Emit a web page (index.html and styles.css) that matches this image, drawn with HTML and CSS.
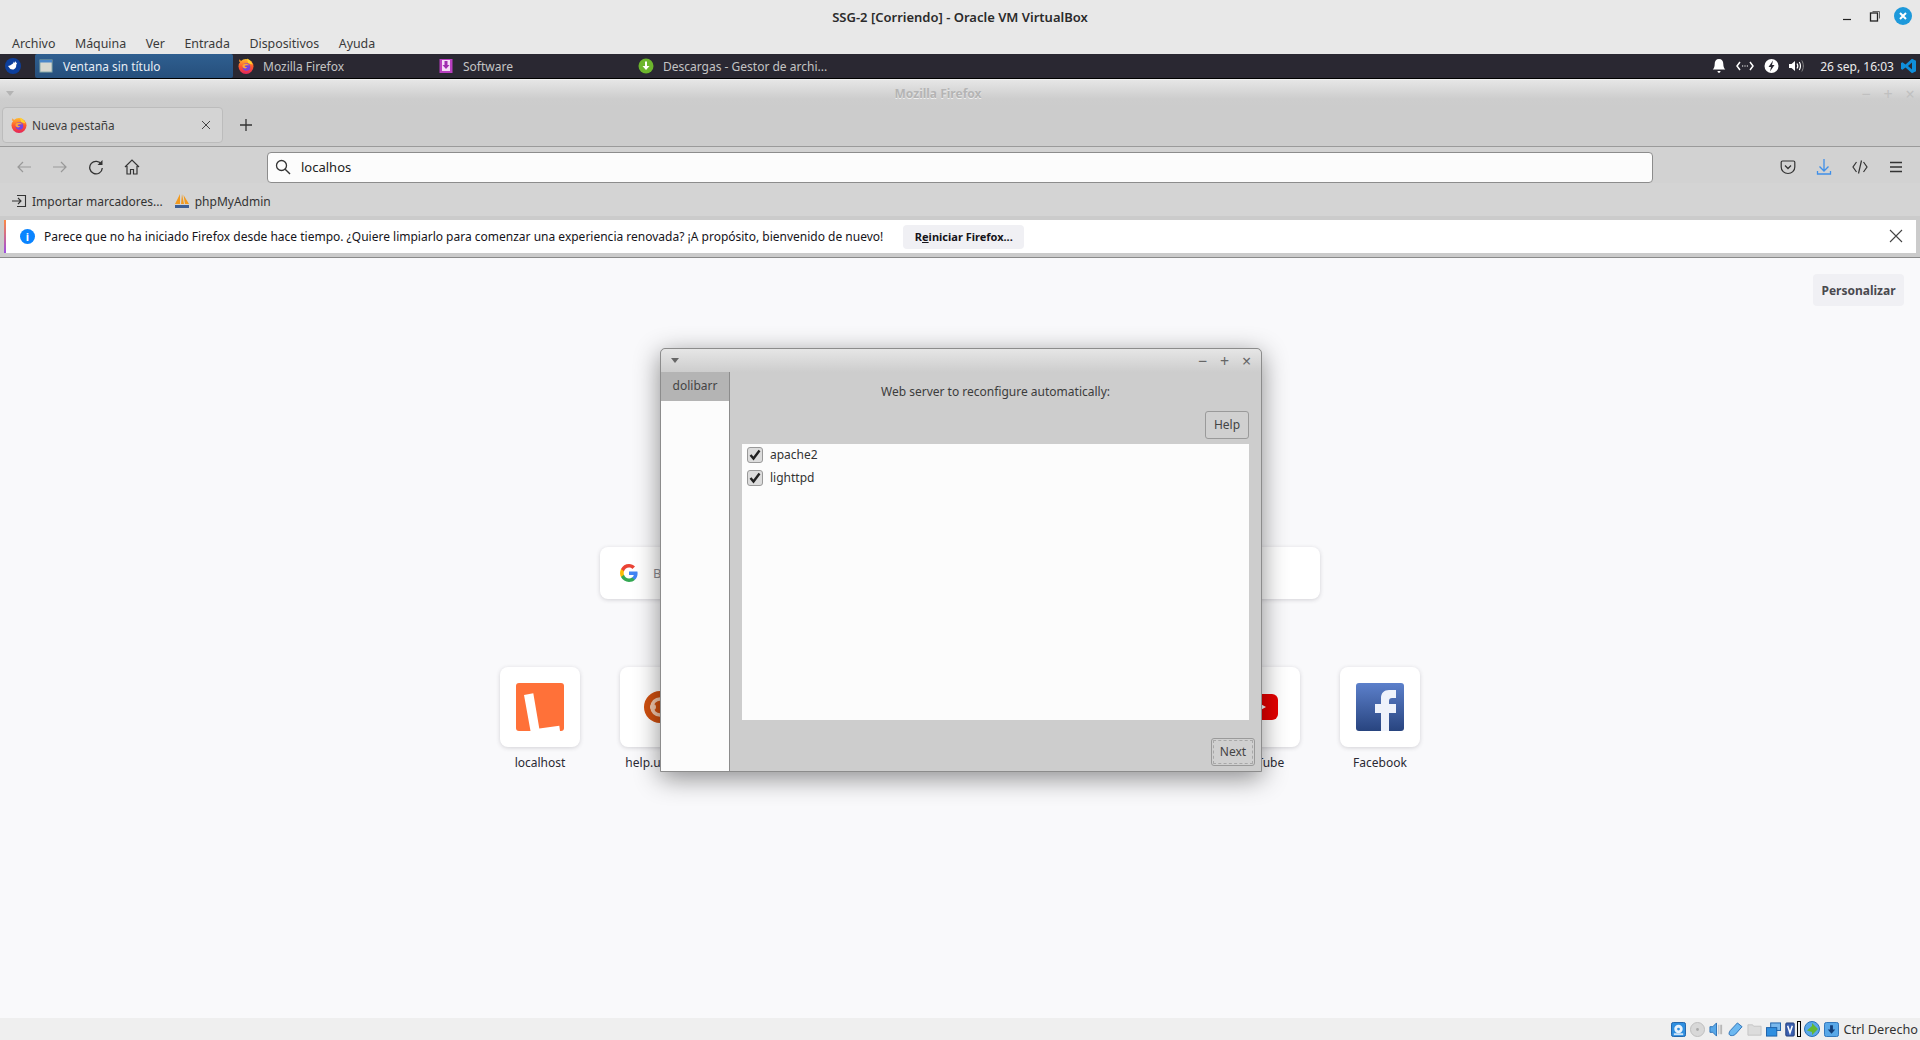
FILE: index.html
```html
<!DOCTYPE html>
<html lang="es">

<head>
    <meta charset="UTF-8">
    <meta name="viewport" content="width=device-width, initial-scale=1.0">
    <title>SSG-2 [Corriendo] - Oracle VM VirtualBox</title>
    <link rel="stylesheet" href="styles.css">
</head>

<body>
    <svg class="defs" width="0" height="0">
        <defs>
            <linearGradient id="fxBody" x1="0" y1="0" x2="0" y2="1">
                <stop offset="0" stop-color="#ffbd2e" />
                <stop offset=".5" stop-color="#ff5a2c" />
                <stop offset="1" stop-color="#e3245c" />
            </linearGradient>
            <symbol id="firefox" viewBox="0 0 16 16">
                <circle cx="8" cy="8.500" r="7.500" fill="url(#fxBody)" />
                <path d="M9 .5c2.500 1.500 4.500 3 5.500 6l-4.500-1.500z" fill="#ffd42e" />
                <path d="M1.500 4C1 3 1.200 2 1.500 1.200c.5 1 1.300 1.800 2.500 2.300z" fill="#ff9a2e" />
                <circle cx="8.500" cy="9" r="3.800" fill="#7542e5" />
                <path d="M5 6.500c2-1.500 5-1 6.500 1-2-.6-4-.4-5 .5.500 1 1.500 1.300 2.800 1.300-.8 1.400-3 1.500-4.300.2C4.200 8.600 4.400 7.300 5 6.500z" fill="#ffa436" />
            </symbol>
        </defs>
    </svg>

    <header class="vbox-head">
        <div class="vbox-title">
            <span>SSG-2 [Corriendo] - Oracle VM VirtualBox</span>
            <div class="vbox-ctrl">
                <svg width="12" height="12" viewBox="0 0 12 12"><path d="M2 9.500h8" stroke="#222" stroke-width="1.200" /></svg>
                <svg width="12" height="14" viewBox="0 0 12 14"><path d="M3.500 2.500h7v7" fill="none" stroke="#666" /><rect x="1.500" y="4" width="7" height="8" fill="none" stroke="#222" stroke-width="1.300" /></svg>
                <span class="vbox-close">
                    <svg width="10" height="10" viewBox="0 0 10 10"><path d="M2 2l6 6M8 2l-6 6" stroke="#fff" stroke-width="2" /></svg>
                </span>
            </div>
        </div>
        <nav class="vbox-menu">
            <span>Archivo</span>
            <span>Máquina</span>
            <span>Ver</span>
            <span>Entrada</span>
            <span>Dispositivos</span>
            <span>Ayuda</span>
        </nav>
    </header>

    <main class="guest">
        <div class="taskbar">
            <span class="xfce-logo">
                <svg width="16" height="16" viewBox="0 0 16 16"><circle cx="8" cy="8" r="8" fill="#0d3f9c" /><path d="M3 8l2-.5 3-2 1-2 .6 1.500 1.400-2 0 2 1.200-.5-1 2.500c.3 2-1 4.500-3.500 4.500-2 0-3-1-3.500-2z" fill="#fff" /></svg>
            </span>
            <div class="task active">
                <svg width="16" height="16" viewBox="0 0 16 16"><rect x="2" y="2" width="12" height="12" fill="#d8d8d0" stroke="#8aa" /><rect x="2" y="2" width="12" height="2.500" fill="#4a86c8" /></svg>
                <span>Ventana sin título</span>
            </div>
            <div class="task">
                <svg width="16" height="16"><use href="#firefox" /></svg>
                <span>Mozilla Firefox</span>
            </div>
            <div class="task">
                <svg width="16" height="16" viewBox="0 0 16 16"><rect x="1.500" y="1" width="13" height="14" fill="#b83fc0" /><rect x="4" y="2" width="8" height="11" fill="#f4dcf6" /><path d="M6.500 3h3v4h2L8 11 4.500 7h2z" fill="#a02cb0" /></svg>
                <span>Software</span>
            </div>
            <div class="task">
                <svg width="16" height="16" viewBox="0 0 16 16"><circle cx="8" cy="8" r="7.500" fill="#6cb52d" /><path d="M7 3.500h2V8h2.500L8 12 4.500 8H7z" fill="#fff" /></svg>
                <span>Descargas - Gestor de archi...</span>
            </div>
            <div class="tray">
                <svg width="14" height="16" viewBox="0 0 14 16"><path d="M7 1c3 0 4.300 2 4.300 5 0 3 1 4.500 2 5.500H.7c1-1 2-2.500 2-5.500C2.700 3 4 1 7 1z" fill="#fff" /><path d="M5.500 13h3c0 1-.6 1.800-1.500 1.800S5.500 14 5.500 13z" fill="#fff" /></svg>
                <svg width="18" height="12" viewBox="0 0 18 12"><path d="M4 2L1 6l3 4M14 2l3 4-3 4" fill="none" stroke="#fff" stroke-width="1.500" /><path d="M6 6h1.200M8.400 6h1.200M10.800 6H12" stroke="#fff" stroke-width="1.200" /></svg>
                <svg width="15" height="16" viewBox="0 0 15 16"><circle cx="7.500" cy="8" r="7" fill="#fff" /><path d="M9 2.500L4.500 9h2.500l-1 4.500L10.500 7H8z" fill="#2a2832" /></svg>
                <svg width="16" height="14" viewBox="0 0 16 14"><path d="M0 5h2.500L6 2v10L2.500 9H0z" fill="#fff" /><path d="M8 4.500c1 1.500 1 3.500 0 5M10.300 3c1.500 2.500 1.500 5.500 0 8" fill="none" stroke="#fff" stroke-width="1.200" /><path d="M12.800 1.500c2 3.500 2 7.500 0 11" fill="none" stroke="#888" stroke-width="1" /></svg>
                <span class="clock">26 sep, 16:03</span>
                <svg width="15" height="16" viewBox="0 0 15 16"><path d="M11 .8L15 2.700v10.600L11 15.200 4.500 9.500 1.500 11.800 0 11V5l1.500-.8 3 2.300z" fill="#0f8fdc" /><path d="M11 4.500L7 8l4 3.500z" fill="#2a2832" /></svg>
            </div>
        </div>

        <div class="fx-title">
            <span class="win-menu"></span>
            <span class="fx-title-text">Mozilla Firefox</span>
            <div class="win-btns faint">
                <span>−</span><span>+</span><span>×</span>
            </div>
        </div>

        <div class="tabbar">
            <div class="tab">
                <svg width="16" height="16"><use href="#firefox" /></svg>
                <span class="tab-label">Nueva pestaña</span>
                <svg width="10" height="10" viewBox="0 0 10 10"><path d="M1 1l8 8M9 1l-8 8" stroke="#444" stroke-width="1" /></svg>
            </div>
            <svg class="new-tab" width="14" height="14" viewBox="0 0 14 14"><path d="M7 1v12M1 7h12" stroke="#333" stroke-width="1.300" /></svg>
        </div>

        <div class="navbar">
            <div class="nav-btns">
                <svg width="16" height="16" viewBox="0 0 16 16"><path d="M15 8H2M7 3L2 8l5 5" fill="none" stroke="#999" stroke-width="1.200" /></svg>
                <svg width="16" height="16" viewBox="0 0 16 16"><path d="M1 8h13M9 3l5 5-5 5" fill="none" stroke="#999" stroke-width="1.200" /></svg>
                <svg width="16" height="16" viewBox="0 0 16 16"><path d="M13.500 5.500A6.300 6.300 0 1 0 14.300 9" fill="none" stroke="#333" stroke-width="1.300" /><path d="M14.500 1v5h-5z" fill="#333" /></svg>
                <svg width="16" height="16" viewBox="0 0 16 16"><path d="M1 8l7-7 7 7M3 7v8h3.500v-4.500h3V15H13V7" fill="none" stroke="#333" stroke-width="1.200" /></svg>
            </div>
            <div class="urlbar">
                <svg width="16" height="16" viewBox="0 0 16 16"><circle cx="6.500" cy="6.500" r="5" fill="none" stroke="#333" stroke-width="1.300" /><path d="M10.200 10.200L15 15" stroke="#333" stroke-width="1.400" /></svg>
                <span>localhos</span>
            </div>
            <div class="nav-tools">
                <svg width="16" height="16" viewBox="0 0 16 16"><path d="M2.500 2h11c.8 0 1.300.5 1.300 1.300V8c0 3.800-3 6.500-6.800 6.500S1.200 11.800 1.200 8V3.300C1.200 2.500 1.700 2 2.500 2z" fill="none" stroke="#333" stroke-width="1.200" /><path d="M5 6.500L8 9.500l3-3" fill="none" stroke="#333" stroke-width="1.300" /></svg>
                <svg width="16" height="18" viewBox="0 0 16 18"><path d="M8 1v12M3.500 8.500L8 13l4.500-4.500M1.500 13v3h13v-3" fill="none" stroke="#3f8fe8" stroke-width="1.300" /></svg>
                <svg width="16" height="16" viewBox="0 0 16 16"><path d="M4.500 3L1 8l3.500 5M11.500 3L15 8l-3.500 5M9.500 1.500L6.500 14.500" fill="none" stroke="#333" stroke-width="1.200" /></svg>
                <svg class="nav-menu" width="14" height="14" viewBox="0 0 14 14"><path d="M1 2.500h12M1 7h12M1 11.500h12" stroke="#333" stroke-width="1.300" /></svg>
            </div>
        </div>

        <div class="bookmarks">
            <div class="bookmark">
                <svg width="15" height="14" viewBox="0 0 15 14"><path d="M5 1.500h8.500v11H5M0 7h9M6 4l3 3-3 3" fill="none" stroke="#333" stroke-width="1.100" /></svg>
                <span>Importar marcadores...</span>
            </div>
            <div class="bookmark">
                <svg width="16" height="16" viewBox="0 0 16 16"><path d="M1 11L6 1v10zM7 11l1-10 2 10zM11 11L9.500 2 15 11z" fill="#f29a1f" /><path d="M1 12h14v3H1z" fill="#3d5f95" /></svg>
                <span>phpMyAdmin</span>
            </div>
        </div>

        <div class="notice-wrap">
            <div class="notice">
                <span class="notice-info">i</span>
                <span class="notice-text">Parece que no ha iniciado Firefox desde hace tiempo. ¿Quiere limpiarlo para comenzar una experiencia renovada? ¡A propósito, bienvenido de nuevo!</span>
                <button class="notice-btn">R<u>e</u>iniciar Firefox...</button>
                <svg class="notice-close" width="14" height="14" viewBox="0 0 14 14"><path d="M1 1l12 12M13 1L1 13" stroke="#444" stroke-width="1.100" /></svg>
            </div>
        </div>

        <section class="newtab">
            <div class="customize-row">
                <button class="customize">Personalizar</button>
            </div>
            <div class="search-box">
                <svg width="18" height="18" viewBox="0 0 18 18"><path d="M17.600 9.200c0-.6-.1-1.200-.2-1.800H9v3.500h4.800c-.2 1.100-.8 2-1.800 2.700v2.200h2.900c1.700-1.600 2.700-3.900 2.700-6.600z" fill="#4285f4" /><path d="M9 18c2.400 0 4.500-.8 5.900-2.200L12 13.600c-.8.500-1.800.9-3 .9-2.300 0-4.300-1.600-5-3.700H1v2.300C2.500 16 5.500 18 9 18z" fill="#34a853" /><path d="M4 10.800c-.2-.5-.3-1.100-.3-1.800s.1-1.200.3-1.800V4.900H1C.4 6.100 0 7.500 0 9s.4 2.900 1 4.100z" fill="#fbbc05" /><path d="M9 3.600c1.300 0 2.500.5 3.400 1.300L15 2.400C13.500 1 11.400 0 9 0 5.500 0 2.500 2 1 4.900l3 2.300c.7-2.100 2.700-3.600 5-3.600z" fill="#ea4335" /></svg>
                <span>Buscar con Google o introducir una dirección</span>
            </div>
            <div class="tiles">
                <div class="tile-item">
                    <div class="tile">
                        <svg width="48" height="48" viewBox="0 0 48 48"><rect width="48" height="48" rx="3" fill="#ff7139" /><path d="M8 12l9.300-1.700 6 35.200 20-2.800.7 5.300H14.500z" fill="#fff" /></svg>
                    </div>
                    <span>localhost</span>
                </div>
                <div class="tile-item">
                    <div class="tile">
                        <svg width="32" height="32" viewBox="0 0 32 32"><circle cx="16" cy="16" r="16" fill="#d1500f" /><circle cx="16" cy="16" r="8" fill="none" stroke="#f3c9ae" stroke-width="3.500" /><circle cx="9" cy="16" r="3" fill="#f3c9ae" /></svg>
                    </div>
                    <span>help.ubuntu</span>
                </div>
                <div class="tile-item"><div class="tile"></div></div>
                <div class="tile-item"><div class="tile"></div></div>
                <div class="tile-item"><div class="tile"></div></div>
                <div class="tile-item"><div class="tile"></div></div>
                <div class="tile-item">
                    <div class="tile">
                        <svg width="36" height="26" viewBox="0 0 36 26"><rect width="36" height="26" rx="6" fill="#e60000" /><path d="M14 7.500l10 5.500-10 5.500z" fill="#fff" /></svg>
                    </div>
                    <span>YouTube</span>
                </div>
                <div class="tile-item">
                    <div class="tile">
                        <svg width="48" height="48" viewBox="0 0 48 48">
                            <defs>
                                <linearGradient id="fbBg" x1="0" y1="0" x2="0" y2="1"><stop offset="0" stop-color="#5c80cb" /><stop offset="1" stop-color="#28447f" /></linearGradient>
                            </defs>
                            <rect width="48" height="48" rx="3" fill="url(#fbBg)" />
                            <path d="M25 48V30h-6v-9h6v-6c0-5 3-8 8-8h7v8h-4c-2 0-3 1-3 3v3h7v9h-7v18z" fill="#eef2fb" />
                        </svg>
                    </div>
                    <span>Facebook</span>
                </div>
            </div>
        </section>

        <div class="dialog">
            <div class="dialog-title">
                <span class="win-menu dark"></span>
                <div class="win-btns">
                    <span>−</span><span>+</span><span>×</span>
                </div>
            </div>
            <div class="dialog-body">
                <aside class="dialog-side">
                    <div class="side-item">dolibarr</div>
                </aside>
                <div class="dialog-main">
                    <p class="dialog-question">Web server to reconfigure automatically:</p>
                    <div class="help-row"><button class="gtk-btn">Help</button></div>
                    <ul class="check-list">
                        <li><span class="check"><svg width="12" height="12" viewBox="0 0 12 12"><path d="M1.500 6l3 3.500 6-8" fill="none" stroke="#222" stroke-width="2.400" /></svg></span>apache2</li>
                        <li><span class="check"><svg width="12" height="12" viewBox="0 0 12 12"><path d="M1.500 6l3 3.500 6-8" fill="none" stroke="#222" stroke-width="2.400" /></svg></span>lighttpd</li>
                    </ul>
                    <div class="next-row"><button class="gtk-btn focus">Next</button></div>
                </div>
            </div>
        </div>
    </main>

    <footer class="statusbar">
        <svg width="15" height="15" viewBox="0 0 16 16"><rect x=".5" y=".5" width="15" height="15" rx="2" fill="#2f8fe0" stroke="#1a5fa8" /><circle cx="8" cy="7.500" r="4.500" fill="#e8f2fb" /><circle cx="8" cy="7.500" r="1.500" fill="#2f8fe0" /><path d="M3 12h10v2H3z" fill="#cfe3f6" /></svg>
        <svg width="15" height="15" viewBox="0 0 16 16"><circle cx="8" cy="8" r="7.500" fill="#d8d8d8" stroke="#bdbdbd" /><circle cx="8" cy="8" r="1.500" fill="#aaa" /></svg>
        <svg width="15" height="15" viewBox="0 0 16 16"><path d="M1 5h3l4-4v14l-4-4H1z" fill="#59a8e8" stroke="#2a70b8" /><path d="M10 3h1v10h-1zM12 3h2v10h-2z" fill="#b8b8b8" /></svg>
        <svg width="15" height="15" viewBox="0 0 16 16"><path d="M10 1l5 4-7 8c-1.500 1.500-4.500 2-6 1S1 11 2.500 9z" fill="#6cb8f0" stroke="#2a70b8" /></svg>
        <svg width="15" height="15" viewBox="0 0 16 16"><path d="M1 3h5l1 1.500h8V14H1z" fill="#dcdcdc" stroke="#c4c4c4" /></svg>
        <svg width="15" height="15" viewBox="0 0 16 16"><rect x="5" y="1" width="10.500" height="8" fill="#7ab8ec" stroke="#1a5fa8" /><rect x=".5" y="6" width="11" height="9" fill="#2f8fe0" stroke="#1a5fa8" /></svg>
        <svg width="10" height="15" viewBox="0 0 10 16"><rect x=".5" y="1" width="9" height="14" rx="1" fill="#3a5fb0" stroke="#223d7a" /><path d="M2.500 4l2.500 7.500L7.500 4" fill="none" stroke="#fff" stroke-width="1.600" /></svg>
        <span class="status-cursor"></span>
        <svg width="16" height="16" viewBox="0 0 16 16"><circle cx="8" cy="8" r="7.500" fill="#59a8e8" stroke="#2a70b8" /><path d="M8 2l6 6-6 6V11L3 9.500 8 5z" fill="#63b832" /></svg>
        <svg width="15" height="15" viewBox="0 0 16 16"><rect x=".5" y=".5" width="15" height="15" rx="2" fill="#59a8e8" stroke="#2a70b8" /><path d="M6.500 3.500h3V8H12l-4 4.500L4 8h2.500z" fill="#123d78" /></svg>
        <span class="host-key">Ctrl Derecho</span>
    </footer>
</body>

</html>
```

FILE: styles.css
```css
* {
    box-sizing: border-box;
}

html,
body {
    height: 100%;
}

body {
    margin: 0;
    height: 1040px;
    overflow: hidden;
    display: flex;
    flex-direction: column;
    font-family: "Noto Sans", Arial, sans-serif;
    font-size: 13px;
    color: #222;
    background-color: #f9f9fb;
}

.defs {
    position: absolute;
}

svg {
    display: block;
    flex: none;
}

button {
    font-family: inherit;
    cursor: pointer;
}

/* VirtualBox host window */
.vbox-head {
    height: 54px;
    background-color: #e8e8e8;
    flex: none;
}

.vbox-title {
    height: 35px;
    padding-top: 5px;
    text-align: center;
    font-weight: 600;
    font-size: 13px;
    line-height: 24px;
    color: #2b2b2b;
    position: relative;
}

.vbox-ctrl {
    position: absolute;
    right: 8px;
    top: 7px;
    display: flex;
    align-items: center;
    gap: 16px;
}

.vbox-close {
    width: 18px;
    height: 18px;
    margin-left: -3px;
    border-radius: 50%;
    background-color: #1d99db;
    display: flex;
    align-items: center;
    justify-content: center;
}

.vbox-menu {
    display: flex;
    gap: 19.500px;
    padding-left: 12px;
    height: 19px;
    font-size: 12.400px;
    line-height: 18px;
    color: #3a3a3a;
}

.guest {
    flex: 1;
    display: flex;
    flex-direction: column;
    position: relative;
    min-height: 0;
}

/* xfce panel */
.taskbar {
    height: 25px;
    flex: none;
    display: flex;
    align-items: center;
    background-color: #2a2832;
    border-bottom: 1px solid #000;
    box-shadow: 0 1px 0 #f0f0f0;
    color: #c4c4c4;
    font-size: 12px;
}

.xfce-logo {
    width: 35px;
    padding-left: 5px;
}

.task {
    width: 200px;
    height: 24px;
    display: flex;
    align-items: center;
    gap: 9px;
    padding-left: 5px;
}

.task.active {
    width: 198px;
    border-radius: 2px;
    background: linear-gradient(#2f5f90, #264f7c);
    color: #e8eef4;
    padding-left: 3px;
    font-size: 11.900px;
}

.tray {
    margin-left: auto;
    display: flex;
    align-items: center;
    gap: 10px;
    padding-right: 4px;
    color: #ececec;
}

.clock {
    margin: 0 -3px 0 5px;
}

/* firefox window */
.fx-title {
    height: 27px;
    flex: none;
    margin-top: 1px;
    padding-right: 44px;
    position: relative;
    display: flex;
    align-items: center;
    justify-content: center;
    background: linear-gradient(#e6e6e6, #cdcdcd 70%, #cccccc);
}

.fx-title-text {
    font-weight: 700;
    font-size: 12px;
    color: #b4b4b4;
    text-shadow: 0 1px 0 #eee;
}

.win-menu {
    position: absolute;
    left: 6px;
    top: 11px;
    border-left: 4px solid transparent;
    border-right: 4px solid transparent;
    border-top: 5px solid #b4b4b4;
}

.win-menu.dark {
    left: 10px;
    top: 9px;
    border-top-color: #666;
}

.win-btns {
    position: absolute;
    right: 1.500px;
    top: 0;
    height: 100%;
    display: flex;
    align-items: center;
    gap: 5px;
    font-size: 16px;
    color: #666;
}

.win-btns span {
    width: 17px;
    text-align: center;
}

.win-btns.faint {
    color: #c0c0c0;
}

.dialog-title .win-btns {
    right: 6px;
}

.tabbar {
    height: 40px;
    flex: none;
    display: flex;
    align-items: flex-start;
    padding-left: 2px;
    background-color: #cccccc;
    border-bottom: 1px solid #9a9a9a;
}

.tab {
    width: 221px;
    height: 36px;
    display: flex;
    align-items: center;
    padding: 0 11px 0 8px;
    background-color: #d4d4d4;
    border: 1px solid #bcbcbc;
    border-radius: 4px;
    font-size: 11.800px;
    color: #3c3c3c;
}

.tab-label {
    flex: 1;
    margin-left: 5px;
}

.new-tab {
    margin: 11px 0 0 16px;
}

.navbar {
    height: 36px;
    flex: none;
    display: flex;
    align-items: center;
    padding: 4px 16px 0;
    background-color: #d2d2d2;
}

.nav-btns {
    display: flex;
    gap: 20px;
    width: 251px;
}

.urlbar {
    width: 1386px;
    height: 31px;
    display: flex;
    align-items: center;
    gap: 10px;
    padding-left: 7px;
    background-color: #fcfcfc;
    border: 1px solid #8c8c8c;
    border-radius: 4px;
    font-size: 13px;
    color: #222;
}

.nav-tools {
    display: flex;
    align-items: center;
    gap: 20px;
    margin-left: 127px;
}

.nav-menu {
    margin-left: 1px;
}

.bookmarks {
    height: 33px;
    flex: none;
    display: flex;
    align-items: center;
    gap: 11px;
    padding: 3px 0 0 12px;
    background-color: #d4d4d4;
    font-size: 12px;
    color: #333;
}

.bookmark {
    display: flex;
    align-items: center;
    gap: 5px;
}

/* notification bar */
.notice-wrap {
    height: 42px;
    flex: none;
    padding: 4px 4px 0;
    background-color: #cbcbcb;
    border-bottom: 1px solid #8a8a8a;
}

.notice {
    height: 33px;
    display: flex;
    align-items: center;
    padding-left: 14px;
    background-color: #fff;
    border-left: 2px solid #b054d8;
    border-image: linear-gradient(#ff8a3c, #9a4be8) 1;
    position: relative;
    font-size: 12px;
    color: #15141a;
}

.notice-info {
    width: 15px;
    height: 15px;
    border-radius: 50%;
    background-color: #0a84ff;
    color: #fff;
    font-weight: 700;
    font-size: 11px;
    line-height: 15px;
    text-align: center;
}

.notice-text {
    margin-left: 9px;
}

.notice-btn {
    height: 24px;
    width: 121px;
    margin-left: 20px;
    padding: 0;
    border: none;
    border-radius: 4px;
    background-color: #f0f0f4;
    font-weight: 700;
    font-size: 11px;
    color: #15141a;
}

.notice-close {
    position: absolute;
    right: 13px;
    top: 9px;
}

/* new tab page */
.newtab {
    flex: 1;
    min-height: 0;
    background-color: #f9f9fb;
    display: flex;
    flex-direction: column;
    align-items: center;
}

.customize-row {
    align-self: stretch;
    display: flex;
    justify-content: flex-end;
    padding: 16px 16px 0 0;
}

.customize {
    width: 91px;
    height: 32px;
    padding: 0;
    border: none;
    border-radius: 4px;
    background-color: #f0f0f4;
    font-weight: 700;
    font-size: 12px;
    color: #4a4a4f;
}

.search-box {
    width: 720px;
    height: 52px;
    margin-top: 241px;
    display: flex;
    align-items: center;
    gap: 15px;
    padding-left: 20px;
    background-color: #fff;
    border-radius: 8px;
    box-shadow: 0 1px 4px rgba(58, 57, 68, 0.2);
    color: #8a8a8f;
    font-size: 13px;
}

.tiles {
    display: grid;
    grid-template-columns: repeat(8, 80px);
    gap: 40px;
    margin-top: 68px;
}

.tile-item {
    display: flex;
    flex-direction: column;
    align-items: center;
    gap: 7px;
    font-size: 12px;
    color: #2b2a33;
    white-space: nowrap;
}

.tile {
    width: 80px;
    height: 80px;
    display: flex;
    align-items: center;
    justify-content: center;
    background-color: #fff;
    border-radius: 8px;
    box-shadow: 0 1px 4px rgba(58, 57, 68, 0.2);
}

/* debconf dialog, a window over firefox */
.dialog {
    position: absolute;
    left: 660px;
    top: 294px;
    width: 602px;
    height: 424px;
    display: flex;
    flex-direction: column;
    background-color: #cdcdcd;
    border: 1px solid #8c8c8c;
    border-radius: 5px 5px 0 0;
    box-shadow: 0 6px 26px rgba(0, 0, 0, 0.45);
    font-size: 12px;
    color: #3c3c3c;
}

.dialog-title {
    height: 23px;
    flex: none;
    position: relative;
    border-radius: 5px 5px 0 0;
    background: linear-gradient(#e6e6e6, #cdcdcd);
}

.dialog-body {
    flex: 1;
    display: flex;
    min-height: 0;
}

.dialog-side {
    width: 69px;
    background-color: #fcfcfc;
    border-right: 1px solid #8c8c8c;
}

.side-item {
    height: 29px;
    line-height: 27px;
    text-align: center;
    background-color: #b4b4b4;
    color: #444;
}

.dialog-main {
    flex: 1;
    display: flex;
    flex-direction: column;
    padding: 0 6px 5px 12px;
}

.dialog-question {
    margin: 10px 6px 0 0;
    height: 29px;
    line-height: 20px;
    text-align: center;
}

.help-row {
    display: flex;
    justify-content: flex-end;
    padding-right: 6px;
}

.gtk-btn {
    width: 44px;
    height: 28px;
    padding: 0 0 2px;
    background-color: #d0d0d0;
    border: 1px solid #9a9a9a;
    border-radius: 3px;
    font-size: 12px;
    color: #444;
}

.gtk-btn.focus {
    outline: 1px dashed #a8a8a8;
    outline-offset: -3px;
}

.check-list {
    list-style: none;
    margin: 5px 6px 0 0;
    padding: 0 0 0 5px;
    height: 276px;
    background-color: #fcfcfc;
    color: #333;
}

.check-list li {
    height: 21px;
    margin-bottom: 2px;
    display: flex;
    align-items: center;
    gap: 7px;
}

.check {
    width: 16px;
    height: 16px;
    display: flex;
    align-items: center;
    justify-content: center;
    background-color: #dcdcdc;
    border: 1px solid #999;
    border-radius: 3px;
}

.next-row {
    margin-top: auto;
    display: flex;
    justify-content: flex-end;
}

/* VirtualBox status bar */
.statusbar {
    height: 22px;
    flex: none;
    display: flex;
    align-items: center;
    justify-content: flex-end;
    gap: 4px;
    padding-right: 2px;
    background-color: #efefef;
    color: #333;
}

.status-cursor {
    width: 4px;
    height: 16px;
    border: 1px solid #000;
    margin: 0 -1px 0 -2px;
}

.host-key {
    font-size: 12.700px;
}
```
